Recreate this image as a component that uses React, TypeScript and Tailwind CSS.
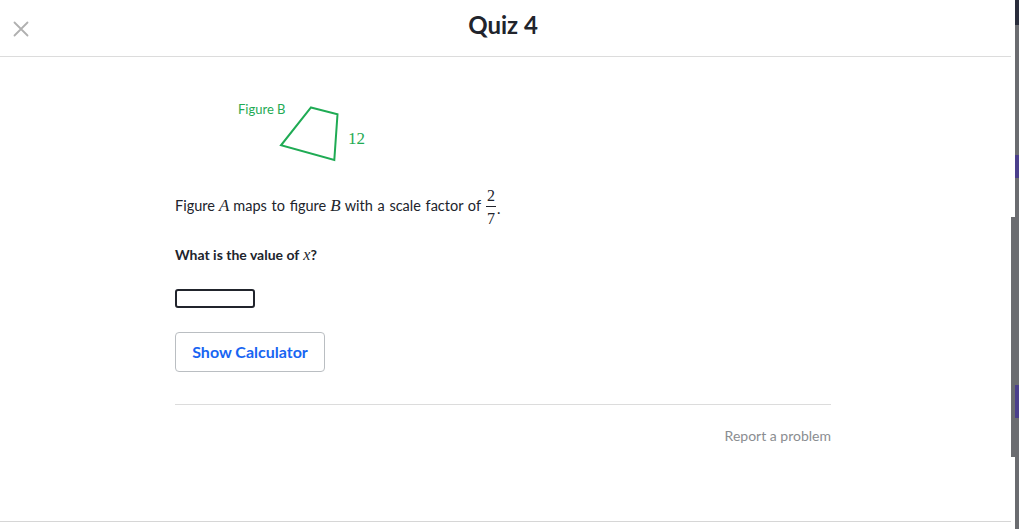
import { useState } from 'react'

const serif = { fontFamily: '"Liberation Serif", "DejaVu Serif", serif' }

const MathVar = ({ children }: { children: string }) => (
  <span className="italic text-[17px] mx-[4px]" style={serif}>
    {children}
  </span>
)

const FigureB = () => (
  <svg width="200" height="80" viewBox="0 0 200 80" className="block">
    <text x="63" y="22" fontSize="13" fill="#1fab54" style={{ fontFamily: 'Lato, sans-serif' }}>
      Figure B
    </text>
    <polygon
      points="136,15.5 162.5,22.3 159.3,68 106,53.3"
      fill="none"
      stroke="#1fab54"
      strokeWidth="2"
    />
    <text x="173" y="52" fontSize="17" fill="#1fab54" style={serif}>
      12
    </text>
  </svg>
)

export default function App() {
  const [answer, setAnswer] = useState('')

  return (
    <div className="flex w-[1019px] h-[529px] bg-white overflow-hidden text-[#21242c]" style={{ fontFamily: 'Lato, "Liberation Sans", sans-serif' }}>
      {/* page */}
      <div className="w-[1011px] h-[522px] flex flex-col border-b border-[#d6d6d6]">
        <header className="grid grid-cols-[1fr_auto_1fr] items-center h-[57px] border-b border-[#dcdcdc] pr-[5px] shrink-0">
          <div className="pl-[13px] pt-[1px]">
            <svg width="16" height="16" viewBox="0 0 16 16" className="block">
              <path d="M1.5 1.5L14.5 14.5M14.5 1.5L1.5 14.5" stroke="#b0b0b0" strokeWidth="1.8" strokeLinecap="round" />
            </svg>
          </div>
          <h1 className="text-[24px] font-bold leading-none text-[#21242c] pb-[7px]">Quiz 4</h1>
          <div />
        </header>

        <main className="w-[1006px] flex-1">
          <div className="w-[656px] mx-auto flex flex-col">
            <div className="mt-[35px]">
              <FigureB />
            </div>

            <p className="mt-[12px] h-[44px] flex items-center text-[14.5px] leading-[20px] [word-spacing:1px]">
              <span>Figure</span>
              <MathVar>A</MathVar>
              <span>maps to figure</span>
              <MathVar>B</MathVar>
              <span>with a scale factor of</span>
              <span className="inline-flex flex-col items-center ml-[5px] text-[16px]" style={serif}>
                <span className="h-[20px] leading-[20px]">2</span>
                <span className="w-[10px] h-px bg-[#21242c]" />
                <span className="h-[20px] leading-[24px]">7</span>
              </span>
              <span className="self-center mt-[6px] ml-[1px]">.</span>
            </p>

            <p className="mt-[17px] text-[14px] leading-[20px] font-bold">
              What is the value of
              <span className="font-normal italic text-[16px] ml-[4px]" style={serif}>x</span>?
            </p>

            <input
              value={answer}
              onChange={e => setAnswer(e.target.value)}
              className="mt-[24px] w-[80px] h-[19px] border-2 border-[#21242c] rounded-[3px] outline-none px-1 text-[13px]"
            />

            <button className="mt-[24px] w-[150px] h-[40px] border border-[#babec2] rounded-[4px] text-[#1865f2] font-bold text-[16px] bg-white">
              Show Calculator
            </button>

            <div className="mt-[32px] border-t border-[#dcdcdc]" />

            <div className="mt-[21px] text-right text-[14px] leading-[20px] text-[#8a8d91]">
              Report a problem
            </div>
          </div>
        </main>
      </div>

      {/* scrollbar gutter */}
      <div className="w-[4px] h-full flex flex-col">
        <div className="h-[217px]" />
        <div className="h-[240px] bg-[#6b6c70]" />
      </div>

      {/* right strip */}
      <div className="w-[4px] h-full flex flex-col bg-[#6b6c70]">
        <div className="h-[25px] bg-[#2a2d3c]" />
        <div className="h-[130px]" />
        <div className="h-[23px] bg-[#4b3f8c]" />
        <div className="h-[207px]" />
        <div className="h-[33px] bg-[#4b3f8c]" />
      </div>
    </div>
  )
}
